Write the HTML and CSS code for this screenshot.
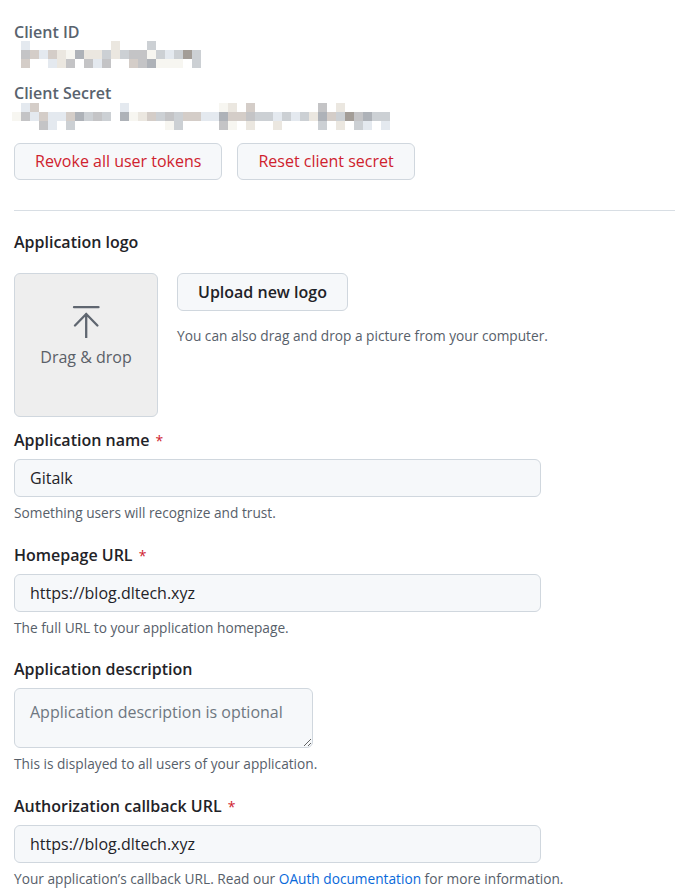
FILE: index.html
```html
<!DOCTYPE html>
<html lang="en">
<head>
<meta charset="utf-8">
<title>OAuth application settings</title>
<link rel="stylesheet" href="styles.css">
</head>
<body>
<div class="page">
  <dl class="creds">
    <dt class="cred-label">Client ID</dt>
    <dd class="mosaic mosaic-id">
      <span class="c"></span><span></span><span></span><span></span><span></span><span></span><span></span><span></span><span></span><span></span><span class="d"></span><span></span><span></span><span></span><span class="h"></span><span></span><span></span><span></span><span></span><span></span>
      <span class="a"></span><span class="b"></span><span class="c"></span><span class="b"></span><span class="d"></span><span class="f"></span><span class="e"></span><span class="d"></span><span class="d"></span><span class="h"></span><span class="d"></span><span class="h"></span><span class="a"></span><span class="a"></span><span class="f"></span><span class="h"></span><span class="c"></span><span class="h"></span><span class="g"></span><span class="h"></span>
      <span class="b"></span><span></span><span></span><span class="c"></span><span class="d"></span><span class="a"></span><span></span><span class="a"></span><span class="c"></span><span class="a"></span><span></span><span></span><span class="b"></span><span class="a"></span><span class="e"></span><span class="f"></span><span class="f"></span><span class="f"></span><span></span><span class="h"></span>
    </dd>
    <dt class="cred-label cred-secret">Client Secret</dt>
    <dd class="mosaic mosaic-secret">
      <span></span><span class="c"></span><span class="b"></span><span></span><span></span><span></span><span></span><span></span><span></span><span></span><span></span><span></span><span class="c"></span><span></span><span></span><span></span><span></span><span></span><span></span><span></span><span></span><span></span><span></span><span class="f"></span><span class="d"></span><span></span><span class="b"></span><span></span><span></span><span></span><span></span><span></span><span></span><span></span><span class="a"></span><span></span><span class="d"></span><span></span><span></span><span></span><span></span><span></span>
      <span class="f"></span><span class="a"></span><span class="c"></span><span class="b"></span><span class="c"></span><span class="c"></span><span class="b"></span><span class="e"></span><span class="h"></span><span class="a"></span><span class="h"></span><span></span><span class="e"></span><span class="f"></span><span class="d"></span><span class="b"></span><span class="h"></span><span class="a"></span><span class="h"></span><span class="b"></span><span class="b"></span><span class="c"></span><span class="c"></span><span class="e"></span><span class="b"></span><span class="b"></span><span class="a"></span><span class="h"></span><span class="h"></span><span class="c"></span><span class="h"></span><span class="c"></span><span class="h"></span><span class="d"></span><span class="e"></span><span class="b"></span><span class="h"></span><span class="g"></span><span class="a"></span><span class="e"></span><span class="h"></span><span class="h"></span>
      <span></span><span></span><span></span><span class="a"></span><span class="c"></span><span></span><span class="h"></span><span></span><span></span><span></span><span></span><span></span><span></span><span></span><span></span><span></span><span></span><span class="f"></span><span class="h"></span><span></span><span></span><span></span><span></span><span class="a"></span><span class="f"></span><span></span><span class="d"></span><span></span><span></span><span class="d"></span><span></span><span></span><span></span><span></span><span class="h"></span><span></span><span class="d"></span><span></span><span class="h"></span><span class="c"></span><span></span><span class="c"></span>
    </dd>
  </dl>

  <div class="actions">
    <button type="button" class="btn btn-danger">Revoke all user tokens</button>
    <button type="button" class="btn btn-danger">Reset client secret</button>
  </div>

  <hr class="divider">

  <form class="app-form">
    <div class="logo-group">
      <span class="label">Application logo</span>
      <div class="logo-row">
        <div class="dropzone">
          <svg class="drop-icon" width="32" height="32" viewBox="0 0 32 32" aria-hidden="true">
            <path d="M4 1.2H28.5" fill="none" stroke="#5f6670" stroke-width="2.3" stroke-linecap="round"/>
            <path d="M5 19.5L16.2 8L27.4 19.5M16.2 8V31.5" fill="none" stroke="#5f6670" stroke-width="2.3" stroke-linecap="round" stroke-linejoin="round"/>
          </svg>
          <span class="drop-text">Drag &amp; drop</span>
        </div>
        <div class="logo-side">
          <button type="button" class="btn btn-upload">Upload new logo</button>
          <p class="logo-note">You can also drag and drop a picture from your computer.</p>
        </div>
      </div>
    </div>

    <div class="field">
      <label class="label" for="app-name">Application name <span class="req">*</span></label>
      <input class="input" id="app-name" type="text" value="Gitalk">
      <p class="note">Something users will recognize and trust.</p>
    </div>

    <div class="field">
      <label class="label" for="home-url">Homepage URL <span class="req">*</span></label>
      <input class="input" id="home-url" type="text" value="https://blog.dltech.xyz">
      <p class="note">The full URL to your application homepage.</p>
    </div>

    <div class="field">
      <label class="label" for="app-desc">Application description</label>
      <textarea class="input textarea" id="app-desc" placeholder="Application description is optional"></textarea>
      <p class="note">This is displayed to all users of your application.</p>
    </div>

    <div class="field">
      <label class="label" for="cb-url">Authorization callback URL <span class="req">*</span></label>
      <input class="input" id="cb-url" type="text" value="https://blog.dltech.xyz">
      <p class="note">Your application’s callback URL. Read our <a class="link" href="#">OAuth documentation</a> for more information.</p>
    </div>
  </form>
</div>
</body>
</html>
```

FILE: styles.css
```css
* {
  box-sizing: border-box;
}

body {
  margin: 0;
  background: #ffffff;
  color: #1f2328;
  font-family: "Open Sans", "Noto Sans", "Liberation Sans", sans-serif;
  font-size: 16px;
}

.page {
  padding: 22px 0 0 14px;
  overflow: hidden;
}

.creds {
  margin: 0;
}

.cred-label {
  font-size: 16px;
  line-height: 20px;
  font-weight: 600;
  color: #59636e;
}

.cred-secret {
  margin-top: 15px;
}

.mosaic {
  margin: 0;
  display: grid;
  grid-template-columns: repeat(20, 9px);
  grid-auto-rows: 9px;
}

.mosaic-id {
  margin: -1px 0 0 7px;
}

.mosaic-secret {
  grid-template-columns: repeat(42, 9px);
  margin: 0 0 0 -2px;
}

.mosaic .a { background: #c4c4c6; }
.mosaic .b { background: #d4cdc8; }
.mosaic .c { background: #e4e9ef; }
.mosaic .d { background: #ebe7e0; }
.mosaic .e { background: #aeb2b8; }
.mosaic .f { background: #f7f6f1; }
.mosaic .g { background: #a39d97; }
.mosaic .h { background: #ccd0d4; }

.actions {
  display: flex;
  gap: 15px;
  margin-top: 13px;
}

.btn {
  font-family: inherit;
  font-size: 16px;
  line-height: 21px;
  font-weight: 500;
  padding: 7px 20px;
  border: 1px solid #d0d7de;
  border-radius: 6px;
  background: #f6f8fa;
  color: #24292f;
  cursor: pointer;
}

.btn-danger {
  color: #cf222e;
}

.divider {
  margin: 30px 0 0;
  border: 0;
  border-top: 1px solid #d8dee4;
  height: 0;
}

.app-form {
  margin: 0;
}

.logo-group {
  margin-top: 19px;
}

.label {
  display: block;
  height: 24px;
  font-size: 16px;
  line-height: 24px;
  font-weight: 600;
  color: #1f2328;
}

.req {
  color: #cf222e;
  font-weight: 400;
  font-size: 14px;
  line-height: 1;
  margin-left: 2px;
}

.logo-row {
  display: flex;
  gap: 19px;
  margin-top: 19px;
}

.dropzone {
  width: 144px;
  height: 144px;
  flex: none;
  border: 1px solid #d0d7de;
  border-radius: 6px;
  background: #eeeeee;
  display: flex;
  flex-direction: column;
  align-items: center;
  padding-top: 32px;
  color: #5a6068;
}

.drop-icon {
  display: block;
}

.drop-text {
  margin-top: 7px;
  line-height: 24px;
  font-size: 16px;
}

.logo-side {
  display: flex;
  flex-direction: column;
  align-items: flex-start;
}

.btn-upload {
  line-height: 22px;
  font-weight: 600;
  color: #1f2328;
}

.logo-note {
  margin: 15px 0 0;
  font-size: 13.7px;
  line-height: 20px;
  color: #57606a;
}

.field {
  margin-top: 11px;
}

.field + .field {
  margin-top: 19.5px;
}

.field .label {
  margin-bottom: 7px;
}

.input {
  display: block;
  width: 527px;
  height: 38px;
  margin: 0;
  padding: 0 15px;
  border: 1px solid #d0d7de;
  border-radius: 6px;
  background: #f6f8fa;
  font-family: inherit;
  font-size: 16px;
  color: #1f2328;
  outline: none;
}

.textarea {
  width: 299px;
  height: 60px;
  padding: 11px 15px;
  line-height: 24px;
  resize: both;
}

.textarea::placeholder {
  color: #6e7781;
}

.note {
  margin: 6px 0 0;
  font-size: 13.7px;
  line-height: 20px;
  color: #57606a;
}

.link {
  color: #0969da;
  text-decoration: none;
}
```
